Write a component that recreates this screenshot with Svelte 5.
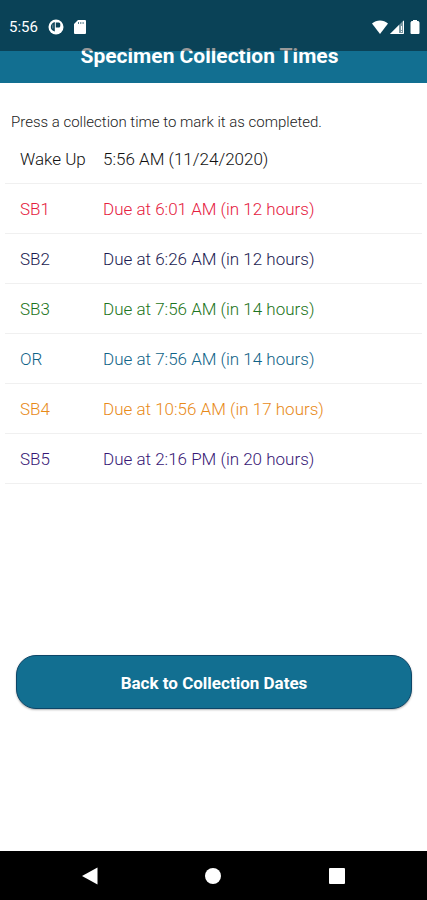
<script lang="ts">
  interface Sample {
    label: string;
    time: string;
    tone: string;
  }

  const samples: Sample[] = [
    { label: 'Wake Up', time: '5:56 AM (11/24/2020)', tone: 'black' },
    { label: 'SB1', time: 'Due at 6:01 AM (in 12 hours)', tone: 'red' },
    { label: 'SB2', time: 'Due at 6:26 AM (in 12 hours)', tone: 'navy' },
    { label: 'SB3', time: 'Due at 7:56 AM (in 14 hours)', tone: 'green' },
    { label: 'OR', time: 'Due at 7:56 AM (in 14 hours)', tone: 'teal' },
    { label: 'SB4', time: 'Due at 10:56 AM (in 17 hours)', tone: 'orange' },
    { label: 'SB5', time: 'Due at 2:16 PM (in 20 hours)', tone: 'purple' }
  ];
</script>

<div class="screen">
  <header class="header">
    <h1>Specimen Collection Times</h1>
    <!-- translucent system bar, drawn over the header -->
    <div class="status">
      <span class="clock">5:56</span>
      <svg width="16" height="16" viewBox="0 0 16 16" aria-hidden="true">
        <circle cx="8" cy="8" r="7.5" fill="#fff" />
        <path d="M6.800 3v9.500C4 12 2.800 10 2.800 8S4 3.500 6.800 3z" fill="#0c4359" />
        <path d="M7.800 3.500h3a1.500 1.500 0 0 1 1.500 1.500v2a1.500 1.500 0 0 1-1.500 1.500h-3z" fill="#0c4359" />
        <path d="M4.200 5.500h1.200v4H4.200z" fill="#fff" opacity=".35" />
      </svg>
      <svg width="12" height="14" viewBox="0 0 12 14" aria-hidden="true">
        <path d="M4 0h7a1 1 0 0 1 1 1v12a1 1 0 0 1-1 1H1a1 1 0 0 1-1-1V4z" fill="#fff" />
        <path d="M4 2h1v2H4zM6.300 2h1v2h-1zM8.600 2h1v2h-1z" fill="#0c4359" opacity=".7" />
      </svg>
      <div class="signals">
        <svg width="16" height="14" viewBox="0 0 16 14" aria-hidden="true">
          <path d="M0 3.500C4.500-.5 11.500-.5 16 3.500L8 14z" fill="#fff" />
        </svg>
        <svg width="14" height="14" viewBox="0 0 14 14" aria-hidden="true">
          <path d="M14 0v14H0z" fill="#fff" opacity=".45" />
          <path d="M9 5v9H0z" fill="#fff" />
          <path d="M13.500 1v12.500H1" fill="none" stroke="#fff" />
          <path d="M11 6h1v4h-1zM11 11h1v1h-1z" fill="#fff" />
        </svg>
        <svg class="battery" width="10" height="14" viewBox="0 0 10 14" aria-hidden="true">
          <path d="M3 0h4v1h1.500L9.500 2.500V13a1 1 0 0 1-1 1h-7a1 1 0 0 1-1-1V2.500L1.500 1H3z" fill="#fff" />
        </svg>
      </div>
    </div>
  </header>

  <main>
    <p class="hint">Press a collection time to mark it as completed.</p>
    <ul class="samples">
      {#each samples as sample}
        <li>
          <button class={`sample ${sample.tone}`} type="button">
            <span>{sample.label}</span>
            <span>{sample.time}</span>
          </button>
        </li>
      {/each}
    </ul>
    <button class="back" type="button">Back to Collection Dates</button>
  </main>

  <nav class="system" aria-label="System navigation">
    <button type="button" aria-label="Back">
      <svg width="18" height="18" viewBox="0 0 18 18"><path d="M1 9 16.500.5v17z" fill="#fff" /></svg>
    </button>
    <button type="button" aria-label="Home">
      <svg width="18" height="18" viewBox="0 0 18 18"><circle cx="9" cy="9" r="8" fill="#fff" /></svg>
    </button>
    <button type="button" aria-label="Recent apps">
      <svg width="18" height="18" viewBox="0 0 18 18"><rect x="1" y="1" width="16" height="16" rx="1" fill="#fff" /></svg>
    </button>
  </nav>
</div>

<style>
  :global(body) {
    margin: 0;
    background: #fff;
  }

  .screen {
    display: flex;
    flex-direction: column;
    min-height: 100vh;
    font-family: Roboto, 'Liberation Sans', sans-serif;
  }

  button {
    margin: 0;
    border: 0;
    font: inherit;
    cursor: pointer;
  }

  .header {
    position: relative;
    padding: 40px 24px 11px 16px;
    background: #126f91;
  }

  h1 {
    margin: 0;
    color: #fff;
    font-size: 21px;
    line-height: 32px;
    font-weight: 700;
    text-align: center;
  }

  .status {
    position: absolute;
    inset: 0 0 auto;
    display: flex;
    align-items: center;
    gap: 10px;
    box-sizing: border-box;
    height: 51px;
    padding: 2px 7px 0 9px;
    background: rgba(0, 0, 0, 0.4);
    color: #fff;
  }

  .clock {
    font-size: 15px;
    line-height: 20px;
  }

  .signals {
    display: flex;
    margin-left: auto;
    gap: 2px;
  }

  .battery {
    margin-left: 4px;
  }

  main {
    display: flex;
    flex: 1;
    flex-direction: column;
  }

  .hint {
    margin: 29px 11px 2px;
    color: #222;
    font-size: 15px;
    line-height: 20px;
    font-weight: 300;
  }

  .samples {
    margin: 0 5px;
    padding: 0;
    list-style: none;
  }

  .samples li {
    border-bottom: 1px solid #f0f0f0;
  }

  .sample {
    display: grid;
    grid-template-columns: 83px 1fr;
    align-items: center;
    width: 100%;
    padding: 15px 15px 14px;
    background: none;
    font-size: 17px;
    line-height: 20px;
    font-weight: 300;
    text-align: left;
  }

  .black {
    color: #111;
  }

  .red {
    color: #e5203e;
  }

  .navy {
    color: #1a1a50;
  }

  .green {
    color: #1c7420;
  }

  .teal {
    color: #0f6387;
  }

  .orange {
    color: #e88a18;
  }

  .purple {
    color: #371775;
  }

  .back {
    margin: 171px 15px 0 16px;
    padding: 17px 16px 15px;
    border: 1px solid #0d4668;
    border-radius: 20px;
    background: #126f91;
    box-shadow: 0 1px 2px rgba(0, 0, 0, 0.3);
    color: #fff;
    font-size: 17px;
    line-height: 20px;
    font-weight: 700;
  }

  .system {
    display: flex;
    justify-content: space-around;
    padding: 1px 28px 0;
    background: #000;
  }

  .system button {
    display: flex;
    padding: 15px;
    background: none;
  }
</style>
